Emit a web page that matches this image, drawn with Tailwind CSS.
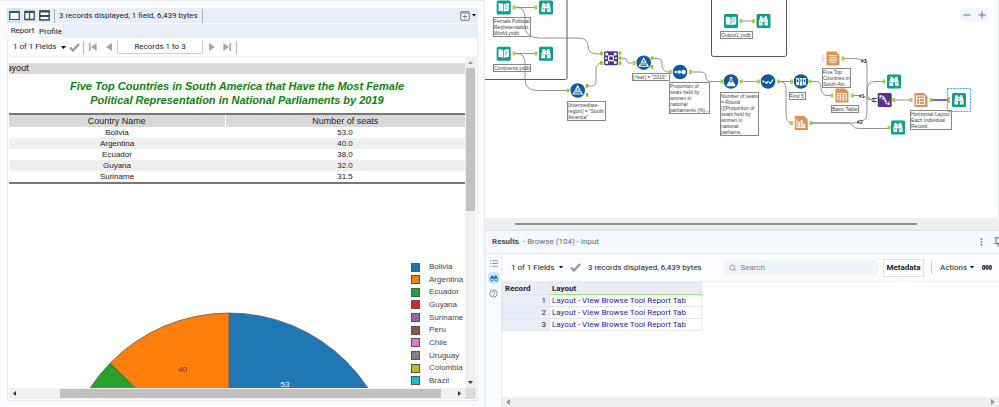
<!DOCTYPE html>
<html lang="en">
<head>
<meta charset="utf-8">
<title>Workflow designer</title>
<script src="https://cdn.jsdelivr.net/npm/@tailwindcss/browser@4"></script>
</head>
<body class="grid h-screen grid-cols-[485fr_514fr] overflow-hidden bg-[#f9fbfe] font-[Roboto,sans-serif] text-[8px] leading-3 text-[#222]">

<!-- Browse window -->
<section class="flex min-w-0 flex-col border-t border-r border-[#e3e9f6] pt-[7px] pr-[6px] pb-[6px] pl-[7px]" aria-label="Browse">
  <header class="flex h-[15px] items-center bg-[#e9edf8]">
    <button class="flex h-[15px] w-[14px] items-center justify-center bg-[#cde6fb]" aria-label="Single view"><svg class="h-[11px] w-[11px]" viewBox="0 0 11 11"><path d="M.8 1.5h9.4v8H.8z" fill="#fff" stroke="#2f5353" stroke-width="1.2"/><path d="M.8 2h9.4" stroke="#2f5353" stroke-width="1.8"/></svg></button>
    <button class="flex w-[16px] items-center justify-center" aria-label="Side by side view"><svg class="h-[11px] w-[11px]" viewBox="0 0 11 11"><path d="M.8 1.5h9.4v8H.8zM5.5 1.5v8" fill="#fff" stroke="#2f5353" stroke-width="1.3"/><path d="M.8 2h9.4" stroke="#2f5353" stroke-width="2"/></svg></button>
    <button class="flex w-[15px] items-center justify-center" aria-label="Stacked view"><svg class="h-[11px] w-[11px]" viewBox="0 0 11 11"><path d="M.8 1h9.4v9H.8zM.8 5.8h9.4" fill="#fff" stroke="#2f5353" stroke-width="1.4"/><path d="M.8 1.4h9.4M.8 6h9.4" stroke="#2f5353" stroke-width="2"/></svg></button>
    <span class="ml-[2px] h-[14px] w-px bg-[#a9adba]"></span>
    <span class="ml-[4px] whitespace-nowrap">3 records displayed, 1 field, 6,439 bytes</span>
    <span class="ml-[4px] h-[14px] w-px bg-[#a9adba]"></span>
    <button class="mr-[2px] ml-auto flex items-center gap-[2px]" aria-label="New window"><svg class="h-[10px] w-[10px]" viewBox="0 0 10 10"><rect x=".7" y=".7" width="8.6" height="8.6" rx="1" fill="#eef1f9" stroke="#6b7790" stroke-width="1"/><path d="M.7 2h8.6M5 3.5v4M3 5.5h4" stroke="#6b7790" stroke-width=".9"/></svg><svg class="h-[3px] w-[4px]" viewBox="0 0 4 3"><path d="M0 0h4L2 2.6z"/></svg></button>
  </header>
  <nav class="mt-px flex h-[14px] items-end bg-[#e9edf8]">
    <button class="h-[14px] w-[31px] bg-[#fbfbfd] leading-[14px]">Report</button>
    <button class="h-[13px] w-[25px] bg-[#f3f4f8] leading-[13px]">Profile</button>
  </nav>
  <div class="flex min-h-0 flex-1 flex-col border-x border-b border-[#e9e9ea] bg-white px-px pb-px">
    <div class="flex h-[19px] shrink-0 items-center border-b border-[#f3f3f3] pl-[4px]">
      <button class="flex w-[53px] items-center justify-between whitespace-nowrap">1 of 1 Fields <svg class="h-[3px] w-[5px]" viewBox="0 0 5 3"><path d="M0 0h5L2.500 3z"/></svg></button>
      <svg class="ml-[3px] h-[9px] w-[11px]" viewBox="0 0 11 9"><path d="M1 4.500l3 3L10 1" fill="none" stroke="#9a9a9a" stroke-width="2.300"/></svg>
      <span class="ml-[3px] h-[13px] w-px bg-[#b5b5b5]"></span>
      <button class="ml-[5px]" aria-label="First"><svg class="h-[8px] w-[8px]" viewBox="0 0 8 8"><path d="M0 0h1.500v8H0zM7.600 0v8L2 4z" fill="#a5a5a5"/></svg></button>
      <button class="ml-[9px]" aria-label="Previous"><svg class="h-[8px] w-[6px]" viewBox="0 0 6 8"><path d="M6 0v8L0 4z" fill="#a5a5a5"/></svg></button>
      <span class="ml-[5px] h-[14px] w-[86px] border-x border-b border-[#cfcfcf] text-center leading-[13px]">Records 1 to 3</span>
      <button class="ml-[6px]" aria-label="Next"><svg class="h-[8px] w-[6px]" viewBox="0 0 6 8"><path d="M0 0v8l6-4z" fill="#a5a5a5"/></svg></button>
      <button class="ml-[8px]" aria-label="Last"><svg class="h-[8px] w-[8px]" viewBox="0 0 8 8"><path d="M6.500 0H8v8H6.500zM.4 0v8L6 4z" fill="#a5a5a5"/></svg></button>
      <span class="ml-[5px] h-[13px] w-px bg-[#b5b5b5]"></span>
    </div>
    <div class="flex min-h-0 flex-1">
      <div class="relative min-w-0 flex-1 overflow-hidden pt-[6px] font-['Liberation_Sans',Arial,sans-serif]">
        <div class="h-[11px] overflow-hidden bg-[#d9d9d9] font-[Roboto,sans-serif] text-[9px] leading-[11px]"><span class="-ml-[2px]">ayout</span></div>
        <h1 class="mt-[5px] text-center text-[11px] leading-[14px] font-bold text-[#118011] italic">Five Top Countries in South America that Have the Most Female<br>Political Representation in National Parliaments by 2019</h1>
        <table class="mt-[6px] w-full table-fixed border-y-2 border-[#777] text-center">
          <thead class="bg-[#d9d9d9] text-[9px]"><tr class="h-[12px] leading-[12px]"><th class="w-[216px] border-t border-r border-white font-normal">Country Name</th><th class="border-t border-white font-normal">Number of seats</th></tr></thead>
          <tbody class="leading-[11px]">
            <tr><td>Bolivia</td><td>53.0</td></tr>
            <tr class="bg-[#efefef]"><td>Argentina</td><td>40.0</td></tr>
            <tr><td>Ecuador</td><td>38.0</td></tr>
            <tr class="bg-[#efefef]"><td>Guyana</td><td>32.0</td></tr>
            <tr><td>Suriname</td><td>31.5</td></tr>
          </tbody>
        </table>
        <!-- Pie chart, drawn around its centre at (229,479) -->
        <svg class="absolute bottom-0 left-0 h-[80px] w-[456px]" viewBox="9 308 456 80" role="img" aria-label="Seats by country">
          <g stroke="#5a5a5a" stroke-width=".8">
            <path d="M229 479V313A166 166 0 0 1 395 479z" fill="#1f77b4"/>
            <path d="M229 479L110 363.300A166 166 0 0 1 229 313z" fill="#ff7f0e"/>
            <path d="M229 479L63 479A166 166 0 0 1 110 363.300z" fill="#2ca02c"/>
          </g>
          <text x="182.500" y="372" font-size="8" text-anchor="middle" fill="#444">40</text>
          <text x="285" y="387" font-size="8" text-anchor="middle" fill="#fff">53</text>
        </svg>
        <ul class="absolute right-0 bottom-[1px] flex h-[126px] w-[54px] flex-col justify-between text-[#444]">
          <li class="flex h-[12px] items-center gap-[9px]"><i class="h-[9px] w-[9px] shrink-0 border border-[#555] bg-[#1f77b4]"></i>Bolivia</li>
          <li class="flex h-[12px] items-center gap-[9px]"><i class="h-[9px] w-[9px] shrink-0 border border-[#555] bg-[#ff7f0e]"></i>Argentina</li>
          <li class="flex h-[12px] items-center gap-[9px]"><i class="h-[9px] w-[9px] shrink-0 border border-[#555] bg-[#2ca02c]"></i>Ecuador</li>
          <li class="flex h-[12px] items-center gap-[9px]"><i class="h-[9px] w-[9px] shrink-0 border border-[#555] bg-[#d62728]"></i>Guyana</li>
          <li class="flex h-[12px] items-center gap-[9px]"><i class="h-[9px] w-[9px] shrink-0 border border-[#555] bg-[#9467bd]"></i>Suriname</li>
          <li class="flex h-[12px] items-center gap-[9px]"><i class="h-[9px] w-[9px] shrink-0 border border-[#555] bg-[#8c564b]"></i>Peru</li>
          <li class="flex h-[12px] items-center gap-[9px]"><i class="h-[9px] w-[9px] shrink-0 border border-[#555] bg-[#e377c2]"></i>Chile</li>
          <li class="flex h-[12px] items-center gap-[9px]"><i class="h-[9px] w-[9px] shrink-0 border border-[#555] bg-[#7f7f7f]"></i>Uruguay</li>
          <li class="flex h-[12px] items-center gap-[9px]"><i class="h-[9px] w-[9px] shrink-0 border border-[#555] bg-[#bcbd22]"></i>Colombia</li>
          <li class="flex h-[12px] items-center gap-[9px]"><i class="h-[9px] w-[9px] shrink-0 border border-[#555] bg-[#17becf]"></i>Brazil</li>
        </ul>
      </div>
      <div class="flex w-[11px] flex-col items-center bg-[#f0f0f0] pt-[4px] pb-[4px]">
        <svg class="h-[3px] w-[5px]" viewBox="0 0 5 3"><path d="M0 3h5L2.500 0z" fill="#999"/></svg>
        <span class="mt-[4px] h-[143px] w-[9px] bg-[#c1c1c1]"></span>
        <svg class="mt-auto h-[3px] w-[5px]" viewBox="0 0 5 3"><path d="M0 0h5L2.500 3z" fill="#333"/></svg>
      </div>
    </div>
    <div class="flex h-[11px] shrink-0 items-center bg-[#f0f0f0]">
      <svg class="ml-[4px] h-[5px] w-[3px]" viewBox="0 0 3 5"><path d="M3 0v5L0 2.500z" fill="#333"/></svg>
      <span class="mr-[17px] ml-[44px] h-[9px] flex-1 bg-[#c1c1c1]"></span>
      <svg class="mr-[4px] h-[5px] w-[3px]" viewBox="0 0 3 5"><path d="M0 0v5l3-2.500z" fill="#333"/></svg>
      <span class="h-full w-[11px] bg-[#dcdcdc]"></span>
    </div>
  </div>
</section>

<div class="flex min-w-0 flex-col">
  <!-- Workflow canvas -->
  <section class="relative min-h-0 flex-1 overflow-hidden border-r border-[#e9edf5] bg-white font-['Liberation_Sans',Arial,sans-serif] text-[5px] leading-[6px] text-[#444]" aria-label="Workflow canvas">
    <svg class="absolute top-0 left-0 h-[218px] w-[514px]" viewBox="485 0 514 218">
      <defs>
        <g id="bino"><rect x="-7" y="-7" width="14" height="14" rx="1.500" fill="#0f9d8c"/><path d="M-3.300-4.700h2v1.500h2.600v-1.500h2l.4 2 .9 3.200v4H.900V.800h-1.800v3.700h-3.700v-4l.9-3.200z" fill="#fff"/><path d="M-1-1.500h2M-4 1.200h2.500M1.500 1.200H4" stroke="#0f9d8c" stroke-width=".6"/></g>
        <g id="book"><rect x="-7" y="-7" width="14" height="14" rx="1.500" fill="#0f9d8c"/><path d="M-5.200-4.200Q-2.300-4.800-.4-3.300V4.300Q-2.500 3-5.200 3.600zM5.200-4.200Q2.300-4.800.4-3.300V4.300Q2.500 3 5.200 3.600z" fill="#fff"/><path d="M1.500-2.200l2.400-.5M1.500-.5l2.400-.5M1.500 1.200l2.400-.5" stroke="#0f9d8c" stroke-width=".6"/></g>
        <g id="filter"><circle r="7.300" fill="#0f5a9c"/><path d="M0-4.500L2.200-.5h-4.400zM-3.300 1.300h6.600L4.500 3.500h-9z" fill="none" stroke="#fff" stroke-width="1.100"/></g>
        <rect id="port" x="-1.500" y="-2" width="3" height="4" rx=".6" fill="#a8d04c"/>
        <path id="page" d="M-6.500-7h9.500l3.500 3.500V7h-13z" fill="#dd9350"/>
      </defs>
      <g fill="none" stroke="#555" stroke-width="1">
        <path d="M485 79.500h80.500q1.500 0 1.500-1.500V0M711.500 0v54.500q0 2 2 2h71q2 0 2-2V0"/>
      </g>
      <g fill="none" stroke="#777" stroke-width=".8">
        <path d="M515 7.500h20M517 7.500q8 0 8 10v8q0 12 14 12.500h39q10 0 10 8t10 8h3"/>
        <path d="M515 53.500h20M517 53.500q8 0 8 10v15q0 12 12 12h30M588 86h3q5 0 5-6V70q0-6 5-7M622 58.500h3q2 0 2 2.500t5 2M653 58.500h5q4 0 4 6t5 7.500h3M692 72h8q6 0 6 5t6 4.500h9M742 21h11M742 81.500h16M780 81.500h11M780 81.500q6 0 6 8v24q0 9 5 9.500M811 81.500h5q5 0 5 6t5 8h5M844 58.500h10q5 0 8 1.500M854 95.500h6M812 123h40q5 0 7-1M812 123h32q7 0 9 3t7 2.500h28M866 61q1 2 1 8v22q0 9 6 9M864 96q3 4 9 4M862 121q5-1 5-8V90q0-8 8-8.500h8M895 100h15"/>
      </g>
      <path d="M932 100h15" stroke="#3b34d8" stroke-width="1.500"/>
      <use href="#book" x="503.700" y="7.500"/><use href="#bino" x="546" y="7.500"/>
      <use href="#book" x="503.700" y="53.700"/><use href="#bino" x="546" y="53.700"/>
      <use href="#book" x="731" y="21"/><use href="#bino" x="763.500" y="21"/>
      <use href="#bino" x="894" y="81.500"/><use href="#bino" x="898" y="127.500"/>
      <use href="#filter" x="577.700" y="90.500"/><use href="#filter" x="643.700" y="62.700"/>
      <g transform="translate(611 58.300)"><rect x="-7" y="-7" width="14" height="14" rx="1.500" fill="#57318c"/><path d="M-4-4L4 4M4-4L-4 4" stroke="#fff" stroke-width="1"/><circle r="2.600" fill="#57318c" stroke="#fff" stroke-width="1.200"/><g fill="#fff"><circle cx="-4.300" cy="-4.300" r="1.500"/><circle cx="4.300" cy="-4.300" r="1.500"/><circle cx="-4.300" cy="4.300" r="1.500"/><circle cx="4.300" cy="4.300" r="1.500"/><circle cx="-5" r="1"/><circle cx="5" r="1"/></g></g>
      <g transform="translate(680 72)"><circle r="7.300" fill="#0f5a9c"/><path d="M-4 0h7" stroke="#fff" stroke-width=".7"/><g fill="#fff"><circle cx="-4.400" r="1.200"/><circle cx="-.8" r="1.700"/><circle cx="3.600" r="2.200"/></g></g>
      <g transform="translate(731 81.500)"><circle r="7.300" fill="#0f5a9c"/><path d="M-1.200-4.500v3.300L-4.300 3.500q-.4 1.300 1 1.300h6.600q1.400 0 1-1.300L1.200-1.200v-3.300z" fill="#fff"/><path d="M-.4-3.800v2.900l-1 1.700h2.800l-1-1.700v-2.900z" fill="#0f5a9c"/></g>
      <g transform="translate(768 81.500)"><circle r="7.300" fill="#0f5a9c"/><circle cx="-4.800" cy="0" r="1.100" fill="#fff"/><path d="M-3.200.200l1.700 1.700L.5-.6M1 .6l1.300 1.300L5.300-2" fill="none" stroke="#fff" stroke-width="1.200"/></g>
      <g transform="translate(801 81.500)"><circle r="7.300" fill="#0f5a9c"/><path d="M-4.800-3.500h2.700V3q-1.300 2-2.700 0zM-1.300-3.500h2.600v7q-1.300 1.800-2.600 0zM2.100-3.500h2.700V3q-1.300 2-2.700 0z" fill="#fff"/><path d="M-4.100-2h1.300V.5h-1.300zM-.6-2H.6v2H-.6zM2.800-2h1.300V.5H2.800z" fill="#0f5a9c"/></g>
      <g transform="translate(801.300 123)"><use href="#page"/><path d="M-4.500-4v8.500h9" fill="none" stroke="#fff" stroke-width="1"/><path d="M-3-1.500h1.800v5.200H-3zM-.5-3h1.800v6.700H-.5zM2 .8h1.800v2.900H2z" fill="#fff"/></g>
      <g transform="translate(833 58.500)"><use href="#page"/><path d="M-4.500-2.800h9M-3.500-.6h7M-4.500 1.600h9M-3 3.800h6" stroke="#fff" stroke-width="1"/></g>
      <g transform="translate(842 95.500)"><use href="#page"/><path d="M-4.500-2h9v6.500h-9zM-4.500.200h9M-4.500 2.300h9M-1.500-2v6.500M1.500-2v6.500" fill="none" stroke="#fff" stroke-width=".8"/></g>
      <g transform="translate(921 100)"><use href="#page"/><path d="M-4.500-4h8v8.500h-8zM-4.500-1.500h8M-1.500-1.500v6M-1.500 1.500h5" fill="none" stroke="#fff" stroke-width="1.100"/></g>
      <g transform="translate(884.700 100)"><rect x="-7" y="-7" width="14" height="14" rx="1.500" fill="#57318c"/><path d="M-5-4.500Q-1-5 0 0T5 4.500M-5-1Q-3-5-1-3.500T1 2T5 1" fill="none" stroke="#fff" stroke-width=".7"/><g fill="#fff"><circle cx="-4.500" cy="-3.600" r="1"/><circle cx="-1.700" cy="-1.200" r="1"/><circle cx="1" cy="1" r="1"/><circle cx="4.200" cy="3.800" r="1"/></g></g>
      <use href="#bino" x="959" y="100"/>
      <g>
        <use href="#port" x="514" y="7.500"/><use href="#port" x="536" y="7.500"/><use href="#port" x="514" y="53.500"/><use href="#port" x="536" y="53.500"/>
        <use href="#port" x="568" y="90.500"/><use href="#port" x="587" y="86"/><use href="#port" x="587" y="95"/>
        <use href="#port" x="601.500" y="53.500"/><use href="#port" x="601.500" y="63"/><use href="#port" x="620" y="53.300"/><use href="#port" x="620" y="58.300"/><use href="#port" x="620" y="63.300"/>
        <use href="#port" x="634" y="63"/><use href="#port" x="652" y="58.300"/><use href="#port" x="652" y="67"/>
        <use href="#port" x="670.500" y="72"/><use href="#port" x="690.500" y="72"/><use href="#port" x="722" y="81.500"/><use href="#port" x="741" y="81.500"/>
        <use href="#port" x="741" y="21"/><use href="#port" x="753.500" y="21"/><use href="#port" x="758.500" y="81.500"/><use href="#port" x="778.500" y="81.500"/>
        <use href="#port" x="791.500" y="81.500"/><use href="#port" x="810" y="81.500"/><use href="#port" x="791.500" y="123"/><use href="#port" x="811" y="123"/>
        <use href="#port" x="843" y="58.500"/><use href="#port" x="832" y="95.500"/><use href="#port" x="852.500" y="95.500"/>
        <use href="#port" x="884" y="81.500"/><use href="#port" x="889" y="127.500"/><use href="#port" x="893.700" y="100"/><use href="#port" x="911" y="100"/><use href="#port" x="931" y="100"/>
        <rect x="947" y="97" width="3" height="6" fill="#a8d04c"/>
      </g>
      <path d="M586.500 85.500h1.500M586.500 94.500h1.500M600.500 53h1.500M600.500 62.500h1.500M619.500 53h1M619.500 58h1M619.500 63h1M651.500 58h1M651.500 66.500h1" stroke="#5a7a28" stroke-width="1"/>
      <path d="M822 56h2.500M822 58.500h2.500M822 61h2.500" stroke="#bbb" stroke-width="1"/>
      <path d="M872 98.500h5M872 101.500h5M874 97.500v5" stroke="#555" stroke-width="1"/>
      <rect x="947.500" y="88.500" width="23" height="23" fill="none" stroke="#4a9bd9" stroke-width="1" stroke-dasharray="2 1"/>
      <g font-size="5" font-weight="bold" fill="#222"><text x="861" y="62.500">#3</text><text x="859" y="97.500">#1</text><text x="857" y="124">#2</text></g>
    </svg>
    <p class="absolute top-[17px] left-[8px] w-[38px] border border-[#888] whitespace-nowrap">Female Political<br>Representation,<br>World.yxdb</p>
    <p class="absolute top-[64px] left-[8px] w-[38px] border border-[#888] whitespace-nowrap">Continents.yxdb</p>
    <p class="absolute top-[101px] left-[82px] w-[39px] border border-[#888] whitespace-nowrap">[Intermediate-<br>region] = "South<br>America"</p>
    <p class="absolute top-[73px] left-[147px] w-[38px] border border-[#888] whitespace-nowrap">[Year] = "2019"</p>
    <p class="absolute top-[82px] left-[184px] w-[41px] border border-[#888] bg-white whitespace-nowrap">Proportion of<br>seats held by<br>women in<br>national<br>parliaments (%)...</p>
    <p class="absolute top-[92px] left-[235px] w-[39px] border border-[#888] whitespace-nowrap">Number of seats<br>= Round<br>(([Proportion of<br>seats held by<br>women in<br>national<br>parliame...</p>
    <p class="absolute top-[31px] left-[235px] w-[33px] border border-[#888] whitespace-nowrap">Output1.yxdb</p>
    <p class="absolute top-[92px] left-[304px] w-[17px] border border-[#888] whitespace-nowrap">First 5</p>
    <p class="absolute top-[68px] left-[337px] w-[29px] border border-[#888] bg-white whitespace-nowrap">Five Top<br>Countries in<br>South Am...</p>
    <p class="absolute top-[105px] left-[346px] w-[28px] border border-[#888] whitespace-nowrap">Basic Table</p>
    <p class="absolute top-[110px] left-[425px] w-[42px] border border-[#888] whitespace-nowrap">Horizontal Layout<br>Each Individual<br>Record</p>
    <div class="absolute top-[8px] right-[9px] flex gap-px">
      <button class="flex h-[14px] w-[14px] items-center justify-center rounded-l-sm bg-[#f2f5fb]" aria-label="Zoom out"><svg class="h-[8px] w-[8px]" viewBox="0 0 8 8"><path d="M.5 4h7" stroke="#5b7393" stroke-width="1"/></svg></button>
      <button class="flex h-[14px] w-[14px] items-center justify-center rounded-r-sm bg-[#f2f5fb]" aria-label="Zoom in"><svg class="h-[8px] w-[8px]" viewBox="0 0 8 8"><path d="M.5 4h7M4 .5v7" stroke="#5b7393" stroke-width="1"/></svg></button>
    </div>
  </section>
  <div class="flex h-[11px] shrink-0 items-center bg-[#efefef] pr-[82px] pl-[30px]"><span class="h-[2px] w-full bg-[#8f8f8f]"></span></div>

  <!-- Results -->
  <section class="flex h-[178px] shrink-0 flex-col border-t-2 border-[#dfe6f2]" aria-label="Results">
    <header class="flex h-[23px] shrink-0 items-center border-b border-[#e0e7f2] bg-[#f5f8fe] pl-[7px] text-[#5b6b85]">
      <h2><b class="font-bold text-[#3f4f69]">Results</b> &nbsp;- Browse (104) - Input</h2>
      <button class="ml-auto" aria-label="Menu"><svg class="h-[8px] w-[3px]" viewBox="0 0 3 8"><path d="M.8.500h1.400v1.400H.8zM.8 3.300h1.400v1.400H.8zM.8 6.100h1.400v1.400H.8z" fill="#52688a"/></svg></button>
      <button class="-mr-[3px] ml-[11px]" aria-label="Pin"><svg class="h-[10px] w-[8px]" viewBox="0 0 8 10"><path d="M1 .8h6M2 .8v4.500L.8 6.500h6.400L6 5.300V.8M4 6.500v3" fill="none" stroke="#52688a" stroke-width="1"/></svg></button>
    </header>
    <div class="flex min-h-0 flex-1">
      <nav class="flex w-[17px] shrink-0 flex-col items-center gap-[3px] border-r border-l border-[#e3eaf5] bg-[#f9fbff] pt-[3px]">
        <button class="flex h-[12px] w-[12px] items-center justify-center" aria-label="Messages"><svg class="h-[7px] w-[8px]" viewBox="0 0 8 7"><path d="M0 .8h1.300M2.300.8H8M0 3.500h1.300M2.300 3.500H8M0 6.200h1.300M2.300 6.200H8" stroke="#8292ad" stroke-width="1"/></svg></button>
        <button class="flex h-[12px] w-[12px] items-center justify-center rounded-sm bg-[#cfe6fb]" aria-label="Browse data"><svg class="h-[7px] w-[8px]" viewBox="0 0 8 7"><path d="M1.500.5h1.500v1h2v-1h1.500L8 4v1L4.500 3.500h-1L0 5V4z" fill="#1373c9"/><circle cx="1.800" cy="4.600" r="1.400" fill="#fff" stroke="#1373c9" stroke-width="1"/><circle cx="6.200" cy="4.600" r="1.400" fill="#fff" stroke="#1373c9" stroke-width="1"/></svg></button>
        <button class="flex h-[12px] w-[12px] items-center justify-center" aria-label="Help"><svg class="h-[9px] w-[9px]" viewBox="0 0 9 9"><circle cx="4.500" cy="4.500" r="3.700" fill="none" stroke="#7a8aa6" stroke-width=".9"/><path d="M3.200 3.700q0-1.300 1.300-1.300t1.300 1.200q0 .8-1.300 1.400v.4M4.500 6.100v.9" fill="none" stroke="#7a8aa6" stroke-width=".9"/></svg></button>
      </nav>
      <div class="flex min-w-0 flex-1 flex-col bg-white">
        <div class="flex h-[28px] shrink-0 items-center border-b border-[#eef2f9] bg-[#fafcff] pl-[9px]">
          <button class="flex w-[52px] items-center justify-between whitespace-nowrap">1 of 1 Fields <svg class="h-[3px] w-[4px]" viewBox="0 0 4 3"><path d="M0 0h4L2 2.600z"/></svg></button>
          <svg class="ml-[7px] h-[9px] w-[11px]" viewBox="0 0 11 9"><path d="M1 4.500l3 3L10 1" fill="none" stroke="#9a9a9a" stroke-width="2.300"/></svg>
          <span class="ml-[7px] whitespace-nowrap">3 records displayed, 6,439 bytes</span>
          <label class="ml-auto flex h-[15px] w-[154px] items-center gap-[4px] rounded-sm bg-[#f1f4fa] pl-[5px]">
            <svg class="h-[8px] w-[8px]" viewBox="0 0 8 8"><circle cx="3.500" cy="3.500" r="2.800" fill="none" stroke="#8292ad" stroke-width=".9"/><path d="M5.500 5.500l2 2" stroke="#8292ad" stroke-width=".9"/></svg>
            <input type="text" placeholder="Search" aria-label="Search" class="w-full min-w-0 bg-transparent placeholder:text-[#71819c]">
          </label>
          <button class="ml-[5px] h-[18px] w-[41px] border border-[#d8e0f3] bg-white font-bold">Metadata</button>
          <span class="ml-[7px] h-[13px] w-px bg-[#ccc]"></span>
          <button class="ml-[8px] flex w-[34px] items-center justify-between">Actions <svg class="h-[3px] w-[4px]" viewBox="0 0 4 3"><path d="M0 0h4L2 2.600z"/></svg></button>
          <button class="mr-[7px] ml-[8px]" aria-label="More"><svg class="h-[5px] w-[10px]" viewBox="0 0 10 5"><g fill="#fff" stroke="#222" stroke-width="1.200"><ellipse cx="1.700" cy="2.500" rx="1.100" ry="1.800"/><ellipse cx="5" cy="2.500" rx="1.100" ry="1.800"/><ellipse cx="8.300" cy="2.500" rx="1.100" ry="1.800"/></g></svg></button>
        </div>
        <table class="w-[200px] table-fixed border-collapse">
          <thead><tr class="h-[12px] bg-[#e9edf8] text-left leading-[11px]"><th class="w-[47px] border border-[#e0e6f4] pl-[2px] font-bold">Record</th><th class="border border-[#e0e6f4] border-b-[#9be58a] pl-[2px] font-bold">Layout</th></tr></thead>
          <tbody class="leading-[11px]">
            <tr class="h-[12px]"><td class="border border-[#e0e6f4] bg-[#e9edf8] pr-[3px] text-right">1</td><td class="border border-[#e0e6f4] pl-[2px]"><a href="#" class="text-[#2a25a0]">Layout - View Browse Tool Report Tab</a></td></tr>
            <tr class="h-[12px]"><td class="border border-[#e0e6f4] bg-[#e9edf8] pr-[3px] text-right">2</td><td class="border border-[#e0e6f4] pl-[2px]"><a href="#" class="text-[#2a25a0]">Layout - View Browse Tool Report Tab</a></td></tr>
            <tr class="h-[12px]"><td class="border border-[#e0e6f4] bg-[#e9edf8] pr-[3px] text-right">3</td><td class="border border-[#e0e6f4] pl-[2px]"><a href="#" class="text-[#2a25a0]">Layout - View Browse Tool Report Tab</a></td></tr>
          </tbody>
        </table>
        <div class="mt-auto flex h-[10px] items-center justify-between bg-[#efefef] px-[4px]">
          <svg class="h-[6px] w-[4px]" viewBox="0 0 4 6"><path d="M4 0v6L0 3z" fill="#999"/></svg>
          <svg class="h-[6px] w-[4px]" viewBox="0 0 4 6"><path d="M0 0v6l4-3z" fill="#999"/></svg>
        </div>
      </div>
    </div>
  </section>
</div>
</body>
</html>
